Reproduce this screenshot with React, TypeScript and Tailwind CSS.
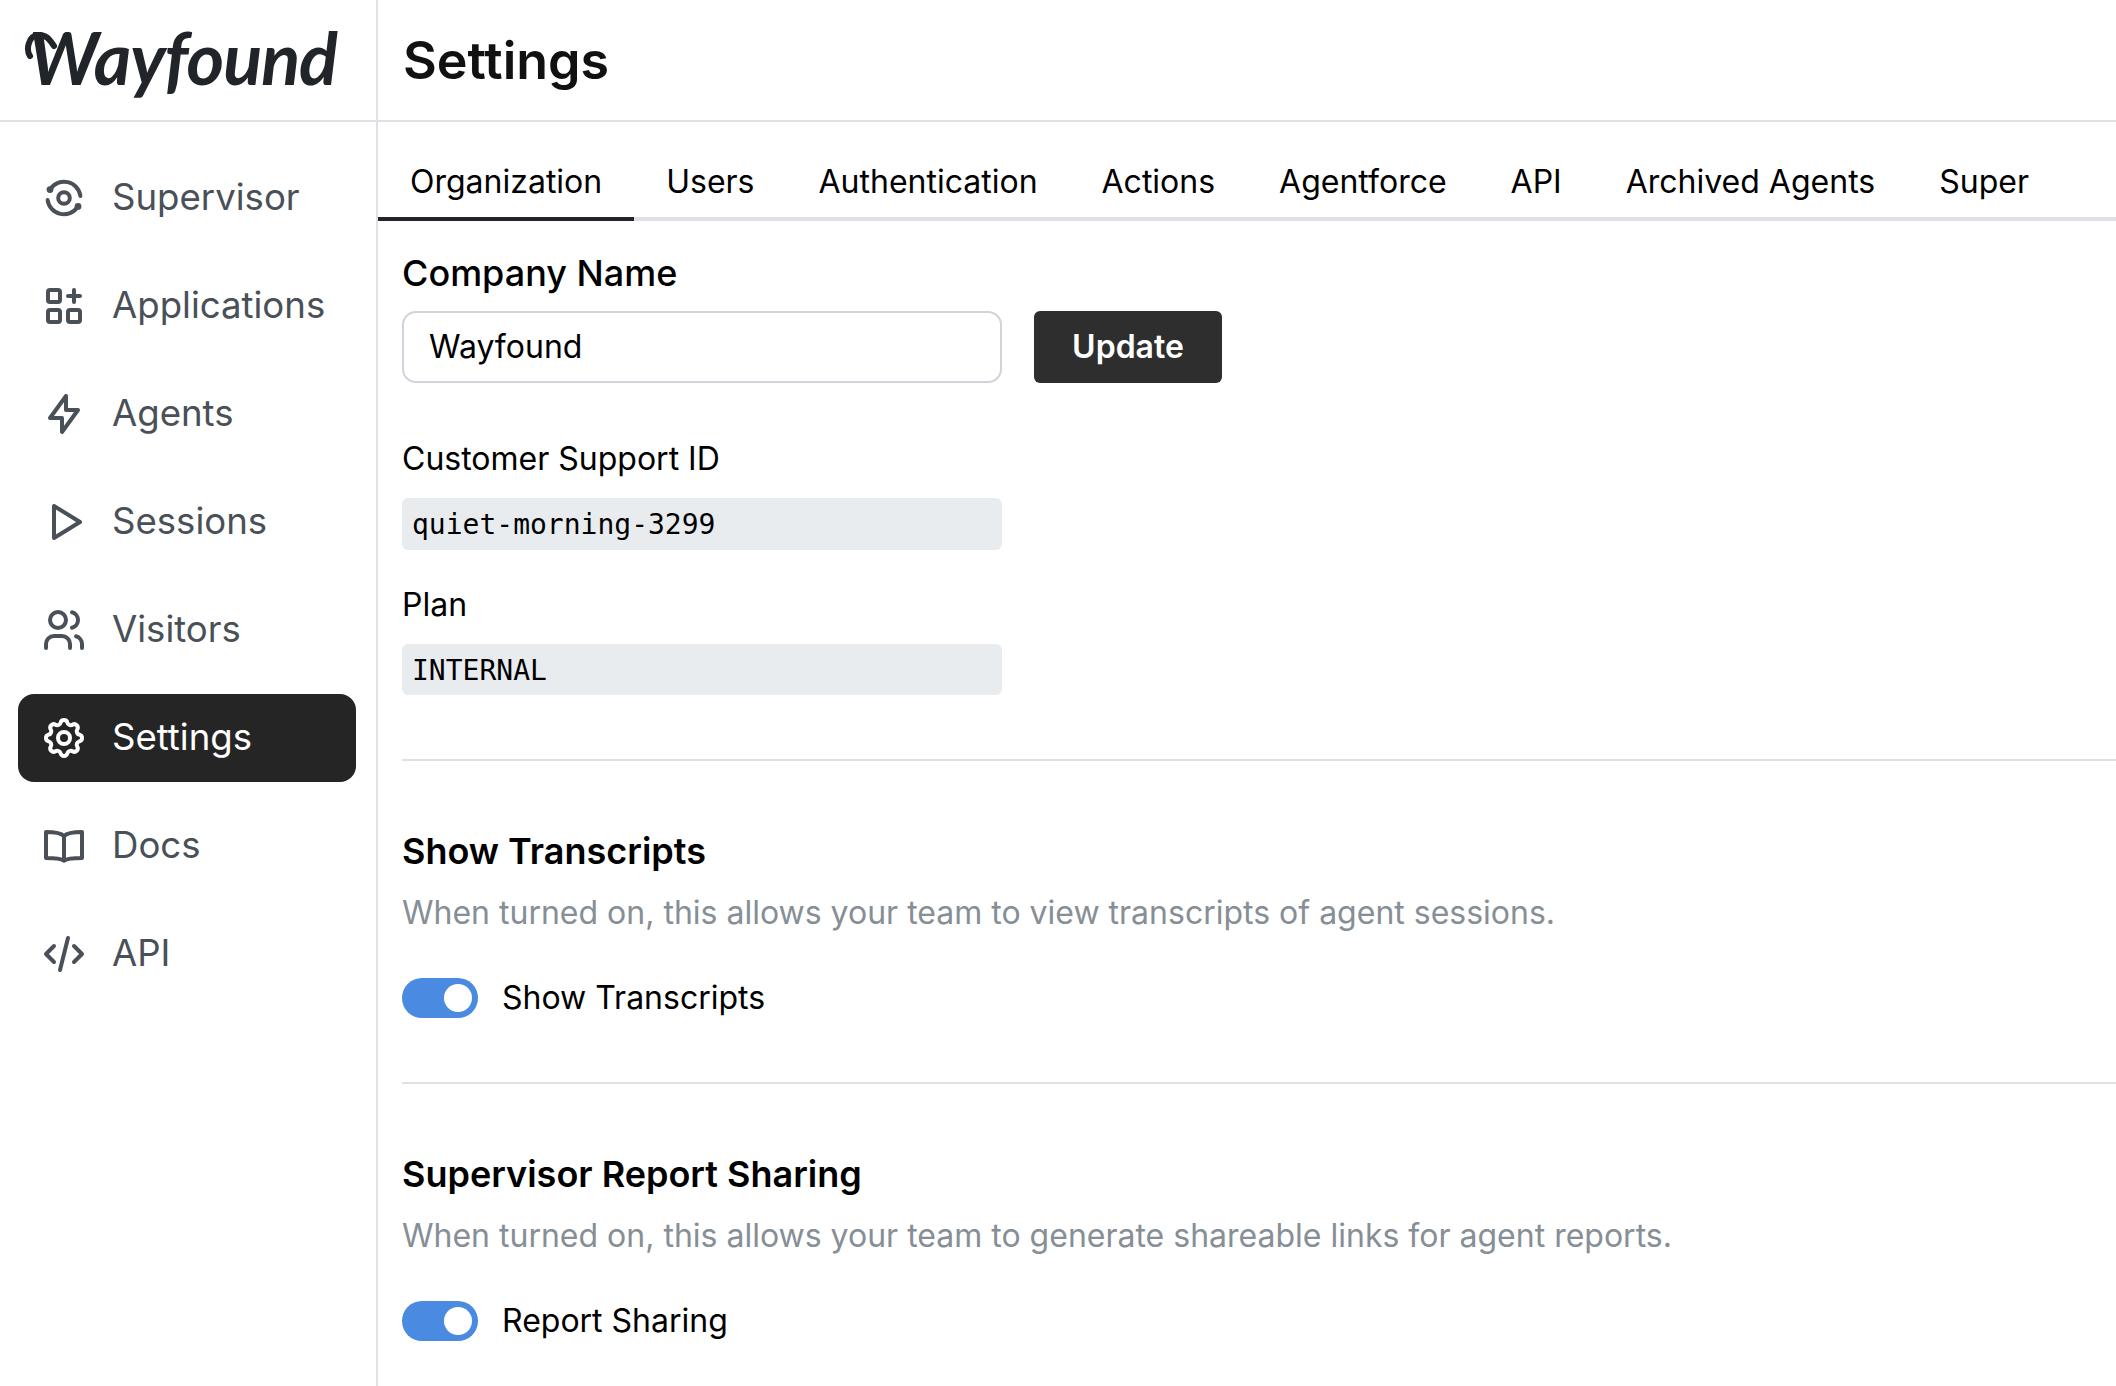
import React from "react";
import { TbBolt, TbPlayerPlay, TbUsers, TbSettings, TbCode } from "react-icons/tb";

const Supervisor = ({ className }: { className?: string }) => (
  <svg viewBox="0 0 24 24" fill="none" stroke="currentColor" strokeWidth="2" strokeLinecap="round" className={className}>
    <circle cx="12" cy="12" r="2.9" />
    <path d="M5.2 7.6A8.2 8.2 0 0 1 20.2 11" />
    <path d="M18.8 16.4A8.2 8.2 0 0 1 3.8 13" />
    <circle cx="5" cy="7.8" r="1.7" fill="currentColor" stroke="none" />
    <circle cx="19" cy="16.2" r="1.7" fill="currentColor" stroke="none" />
  </svg>
);

const GridAdd = ({ className }: { className?: string }) => (
  <svg viewBox="0 0 24 24" fill="none" stroke="currentColor" strokeWidth="2" strokeLinecap="round" strokeLinejoin="round" className={className}>
    <rect x="4" y="4" width="6" height="6" rx="1" />
    <rect x="4" y="14" width="6" height="6" rx="1" />
    <rect x="14" y="14" width="6" height="6" rx="1" />
    <path d="M14 7h6M17 4v6" />
  </svg>
);

const Book = ({ className }: { className?: string }) => (
  <svg viewBox="0 0 24 24" fill="none" stroke="currentColor" strokeWidth="2" strokeLinecap="round" strokeLinejoin="round" className={className}>
    <path d="M12 7C10.5 5.5 8 5 3 5V18C8 18 10.5 18.3 12 19.3C13.5 18.3 16 18 21 18V5C16 5 13.5 5.5 12 7Z" />
    <path d="M12 7V19.3" />
  </svg>
);

const nav = [
  { label: "Supervisor", Icon: Supervisor },
  { label: "Applications", Icon: GridAdd },
  { label: "Agents", Icon: TbBolt },
  { label: "Sessions", Icon: TbPlayerPlay },
  { label: "Visitors", Icon: TbUsers },
  { label: "Settings", Icon: TbSettings, active: true },
  { label: "Docs", Icon: Book },
  { label: "API", Icon: TbCode },
];

const tabs = ["Organization", "Users", "Authentication", "Actions", "Agentforce", "API", "Archived Agents", "Super"];

function Toggle() {
  return (
    <div className="flex h-[40px] w-[76px] items-center justify-end rounded-full bg-[#4a8ae0] pr-[6px]">
      <div className="h-[28px] w-[28px] rounded-full bg-white" />
    </div>
  );
}

export default function App() {
  return (
    <div className="flex h-[1386px] w-[2116px] overflow-hidden bg-white text-black [font-family:Inter,sans-serif]">
      <aside className="flex w-[378px] shrink-0 flex-col border-r-2 border-[#dee2e6]">
        <div className="relative flex h-[122px] shrink-0 items-center border-b-2 border-[#dee2e6] pb-[6px] pl-[29px]">
          <svg viewBox="0 0 40 30" fill="none" stroke="#212529" strokeWidth="6" strokeLinecap="round" className="absolute left-[24px] top-[30px] h-[30px] w-[40px]">
            <path d="M6 26C2 20 4 6 14 5C22 4 26 10 30 16" />
          </svg>
          <span className="text-[72px] font-bold italic leading-none tracking-[-1px] text-[#212529] [font-family:Lato,sans-serif]">Wayfound</span>
        </div>
        <nav className="flex flex-col gap-[20px] pl-[18px] pr-[20px] pt-[32px]">
          {nav.map(({ label, Icon, active }) => (
            <div
              key={label}
              className={
                active
                  ? "flex h-[88px] items-center gap-[24px] rounded-[16px] bg-[#252525] pl-[22px] text-white"
                  : "flex h-[88px] items-center gap-[24px] rounded-[16px] pl-[22px] text-[#495057]"
              }
            >
              <Icon className="h-[48px] w-[48px] shrink-0" />
              <span className="pb-[1px] text-[36.6px] font-normal leading-none">{label}</span>
            </div>
          ))}
        </nav>
      </aside>
      <main className="flex min-w-0 flex-1 flex-col">
        <header className="flex h-[122px] shrink-0 items-center border-b-2 border-[#dee2e6] pl-[25px] pt-[2px]">
          <h1 className="text-[52px] font-semibold leading-none text-[#111]">Settings</h1>
        </header>
        <div className="flex h-[99px] shrink-0 border-b-[4px] border-[#dee2e6]">
          {tabs.map((t, i) => (
            <div
              key={t}
              className={
                i === 0
                  ? "-mb-[4px] flex items-center border-b-[4px] border-[#212529] px-[32px] pt-[24px] text-[32px] leading-none"
                  : "flex items-center px-[32px] pt-[24px] text-[32px] leading-none"
              }
            >
              {t}
            </div>
          ))}
        </div>
        <div className="flex flex-col pl-[24px] pt-[30px]">
          <label className="text-[36px] font-medium leading-[44px]">Company Name</label>
          <div className="mt-[16px] flex items-end gap-[32px]">
            <div className="flex h-[72px] w-[600px] items-center rounded-[14px] border-2 border-[#ced4da] pl-[25px] text-[32px]">Wayfound</div>
            <button className="h-[72px] w-[188px] rounded-[6px] bg-[#2e2e2e] text-[32px] font-semibold text-white">Update</button>
          </div>
          <div className="mt-[56px] text-[32px] leading-[40px]">Customer Support ID</div>
          <div className="mt-[19px] flex h-[52px] w-[600px] items-center rounded-[6px] bg-[#e9ecef] pl-[10px] pt-[2px] text-[28px] [font-family:'DejaVu_Sans_Mono',monospace]">quiet-morning-3299</div>
          <div className="mt-[35px] text-[32px] leading-[40px]">Plan</div>
          <div className="mt-[19px] flex h-[51px] w-[600px] items-center rounded-[6px] bg-[#e9ecef] pl-[10px] pt-[2px] text-[28px] [font-family:'DejaVu_Sans_Mono',monospace]">INTERNAL</div>
          <div className="mt-[64px] h-[2px] bg-[#dee2e6]" />
          <h2 className="mt-[68px] text-[36px] font-semibold leading-[44px]">Show Transcripts</h2>
          <p className="mt-[20px] text-[32px] leading-[40px] text-[#868e96]">When turned on, this allows your team to view transcripts of agent sessions.</p>
          <div className="mt-[45px] flex items-center gap-[24px]">
            <Toggle />
            <span className="text-[32px] leading-[40px]">Show Transcripts</span>
          </div>
          <div className="mt-[64px] h-[2px] bg-[#dee2e6]" />
          <h2 className="mt-[68px] text-[36px] font-semibold leading-[44px]">Supervisor Report Sharing</h2>
          <p className="mt-[20px] text-[32px] leading-[40px] text-[#868e96]">When turned on, this allows your team to generate shareable links for agent reports.</p>
          <div className="mt-[45px] flex items-center gap-[24px]">
            <Toggle />
            <span className="text-[32px] leading-[40px]">Report Sharing</span>
          </div>
        </div>
      </main>
    </div>
  );
}
